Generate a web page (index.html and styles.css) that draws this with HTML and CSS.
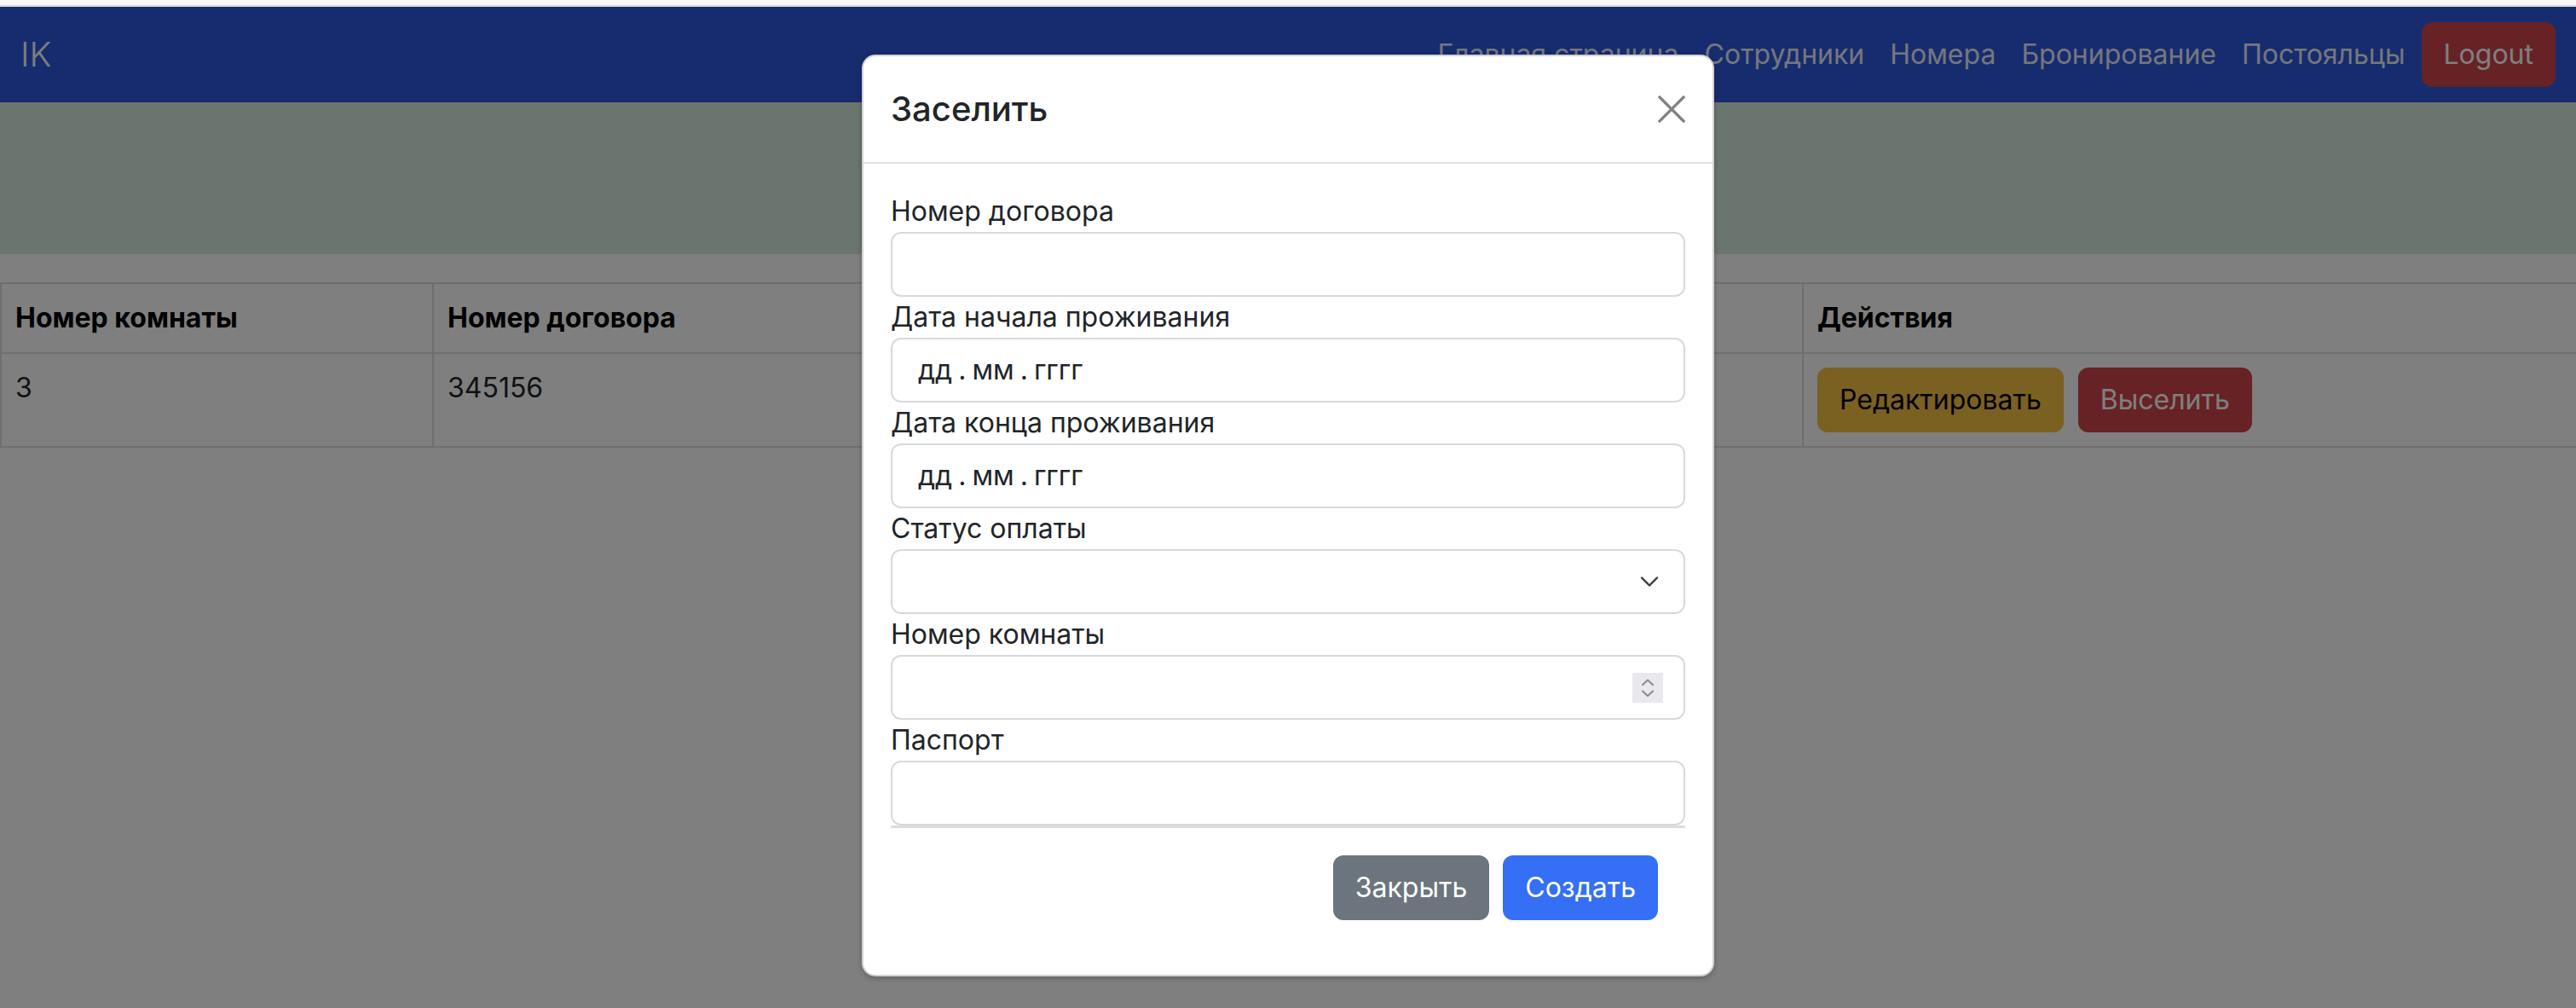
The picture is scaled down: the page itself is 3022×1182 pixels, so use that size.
FILE: index.html
```html
<!DOCTYPE html>
<html lang="ru">
<head>
<meta charset="utf-8">
<title>Постояльцы</title>
<link rel="stylesheet" href="styles.css">
</head>
<body>
<div class="chrome"></div>
<div class="viewport">
  <nav class="navbar">
    <a class="brand" href="#">IK</a>
    <ul class="nav-links">
      <li><a href="#">Главная страница</a></li>
      <li><a href="#">Сотрудники</a></li>
      <li><a href="#">Номера</a></li>
      <li><a href="#">Бронирование</a></li>
      <li><a href="#">Постояльцы</a></li>
      <li><button class="btn btn-danger">Logout</button></li>
    </ul>
  </nav>
  <header class="hero"></header>
  <main class="content">
    <table class="table">
      <colgroup>
        <col class="c1"><col class="c2"><col class="c3"><col class="c4"><col class="c5">
      </colgroup>
      <thead>
        <tr>
          <th>Номер комнаты</th>
          <th>Номер договора</th>
          <th></th>
          <th></th>
          <th>Действия</th>
        </tr>
      </thead>
      <tbody>
        <tr>
          <td>3</td>
          <td>345156</td>
          <td></td>
          <td></td>
          <td class="actions">
            <button class="btn btn-warning">Редактировать</button>
            <button class="btn btn-danger">Выселить</button>
          </td>
        </tr>
      </tbody>
    </table>
  </main>

  <div class="backdrop">
    <div class="modal">
      <div class="modal-header">
        <h5 class="modal-title">Заселить</h5>
        <button class="btn-close" aria-label="Close">
          <svg viewBox="0 0 32 32" width="32" height="32"><path d="M2 2 L30 30 M30 2 L2 30" stroke="currentColor" stroke-width="3.2" stroke-linecap="square" fill="none"/></svg>
        </button>
      </div>
      <div class="modal-body">
        <label class="form-label">Номер договора</label>
        <div class="form-control"></div>
        <label class="form-label">Дата начала проживания</label>
        <div class="form-control date"><span>дд</span><span class="sep">.</span><span>мм</span><span class="sep">.</span><span>гггг</span></div>
        <label class="form-label">Дата конца проживания</label>
        <div class="form-control date"><span>дд</span><span class="sep">.</span><span>мм</span><span class="sep">.</span><span>гггг</span></div>
        <label class="form-label">Статус оплаты</label>
        <div class="form-control select">
          <svg class="chev" viewBox="0 0 16 16" width="32" height="24" preserveAspectRatio="xMidYMid meet"><path d="m2 5 6 6 6-6" fill="none" stroke="#343a40" stroke-width="1.6" stroke-linecap="round" stroke-linejoin="round"/></svg>
        </div>
        <label class="form-label">Номер комнаты</label>
        <div class="form-control number">
          <span class="spin">
            <svg viewBox="0 0 36 35" width="36" height="35"><path d="M12 14 L18 8.5 L24 14 M12 21.5 L18 27 L24 21.5" fill="none" stroke="#8b8b96" stroke-width="2.2" stroke-linecap="round" stroke-linejoin="round"/></svg>
          </span>
        </div>
        <label class="form-label">Паспорт</label>
        <div class="form-control"></div>
        <div class="modal-footer">
          <button class="btn btn-secondary">Закрыть</button>
          <button class="btn btn-primary">Создать</button>
        </div>
      </div>
    </div>
  </div>
</div>
</body>
</html>
```
FILE: styles.css
```css
* { box-sizing: border-box; }
html, body { margin: 0; padding: 0; }
body {
  font-family: Inter, "Noto Sans", "Liberation Sans", sans-serif;
  font-size: 32px;
  line-height: 48px;
  color: #212529;
  background: #fff;
}
.chrome {
  height: 8px;
  background: #f7f7f7;
  border-bottom: 2px solid #d8d8d8;
}
.viewport {
  position: relative;
  min-height: 1174px;
  background: #fff;
}
.navbar {
  height: 112px;
  background: #2e58dc;
  display: flex;
  align-items: center;
  justify-content: space-between;
  padding: 0 24px;
}
.brand {
  color: #fff;
  font-size: 40px;
  font-weight: 300;
  text-decoration: none;
  line-height: 60px;
}
.nav-links {
  list-style: none;
  margin: 0;
  padding: 0;
  display: flex;
  align-items: center;
}
.nav-links a {
  color: rgba(255,255,255,.92);
  text-decoration: none;
  padding: 16px 15px;
  display: block;
}
.nav-links li:last-child { margin-left: 4px; }
.btn {
  font-family: inherit;
  font-size: 32px;
  line-height: 48px;
  padding: 12px 24px;
  border: 2px solid transparent;
  border-radius: 12px;
  cursor: pointer;
}
.btn-danger { background: #cc444a; color: #fff; }
.btn-warning { background: #f4c244; color: #000; }
.btn-secondary { background: #6c757d; color: #fff; }
.btn-primary { background: #346ff5; color: #fff; }
.hero {
  height: 178px;
  background: #d4eade;
}
.content { padding-top: 33px; }
.table {
  width: 100%;
  border-collapse: collapse;
  table-layout: fixed;
  vertical-align: top;
}
.c1 { width: 507px; }
.c2 { width: 507px; }
.c3 { width: 550px; }
.c4 { width: 550px; }
.c5 { width: 908px; }
.table th, .table td {
  border: 2px solid #dedede;
  padding: 16px;
  text-align: left;
  vertical-align: top;
}
.table th { font-weight: 700; color: #000; }
.actions .btn + .btn { margin-left: 8px; }

.backdrop {
  position: absolute;
  inset: 0;
  background: rgba(0,0,0,.5);
  display: flex;
  justify-content: center;
  align-items: flex-start;
}
.modal {
  width: 1000px;
  margin-top: 56px;
  background: #fff;
  border: 2px solid rgba(0,0,0,.175);
  border-radius: 16px;
  box-shadow: 0 2px 6px rgba(0,0,0,.25);
}
.modal-header {
  display: flex;
  align-items: center;
  justify-content: space-between;
  padding: 32px;
  border-bottom: 2px solid #dee2e6;
}
.modal-title {
  margin: 0;
  font-size: 40px;
  line-height: 60px;
  font-weight: 500;
}
.btn-close {
  background: none;
  border: 0;
  padding: 0;
  width: 32px;
  height: 32px;
  color: #808080;
  display: flex;
}
.modal-body { padding: 32px; }
.form-label { display: block; }
.form-control {
  height: 76px;
  border: 2px solid #d6dade;
  border-radius: 12px;
  padding: 12px 24px;
  display: flex;
  align-items: center;
}
.date { padding-left: 30px; }
.date .sep { margin: 0 7px; }
.select { justify-content: flex-end; }
.number { justify-content: flex-end; }
.spin {
  width: 36px;
  height: 35px;
  background: #e9e9ed;
  display: flex;
}
.modal-footer {
  display: flex;
  justify-content: flex-end;
  padding: 24px;
  border-top: 3px solid #d9dde1;
}
.modal-footer .btn { margin: 8px; }
```
